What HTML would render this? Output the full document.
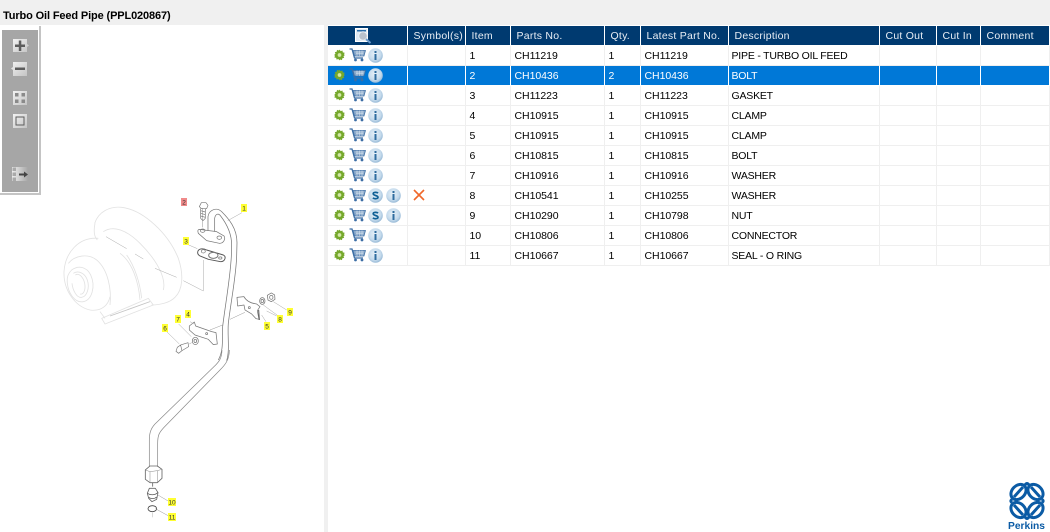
<!DOCTYPE html>
<html><head><meta charset="utf-8"><style>
html,body{margin:0;padding:0;width:1050px;height:532px;overflow:hidden;background:#fff;font-family:"Liberation Sans",sans-serif}
.a{position:absolute}
#top{left:0;top:0;width:1050px;height:25px;background:#f0f0f0}
#title{left:3px;top:9px;font:bold 11px/14px "Liberation Sans",sans-serif;color:#000;white-space:nowrap;letter-spacing:-.13px}
#split{left:324px;top:25px;width:4px;height:507px;background:#f0f0f0}
#tb{left:0;top:26px;width:39px;height:167px;border:solid #c4c4c4;border-width:0 2px 2px 0;background:#fff}
#tbi{left:2px;top:4px;width:36px;height:162px;background:#a6a6a6}
table{position:absolute;left:328px;top:26px;border-collapse:collapse;table-layout:fixed;width:722px;font-size:10.5px}
th{background:#003a70;color:#e8eef5;font-weight:normal;height:19px;padding:0 0 0 6px;text-align:left;border-right:1px solid #fff;border-bottom:1px solid #fff;white-space:nowrap;letter-spacing:.25px;overflow:hidden}
td{height:19px;padding:0 0 0 4px;border-right:1px solid #efefef;border-bottom:1px solid #efefef;color:#000;white-space:nowrap;overflow:hidden;letter-spacing:-.05px}
td:nth-child(7){padding-left:3px;letter-spacing:-.2px}
tr.s td{background:#0078d7;color:#fff;border-right-color:#fff;border-bottom-color:#fff}
td.i{padding:0;position:relative}
td.i svg{position:absolute;left:0;top:0}
</style></head><body>
<svg width="0" height="0" style="position:absolute"><defs>
<filter id="soft" x="-5%" y="-5%" width="110%" height="110%"><feGaussianBlur stdDeviation=".3"/></filter>
<symbol id="g" viewBox="0 0 12 12"><path d="M6 .2l1.300 1.600 1.900-.7.400 2 2 .4-.7 1.900L11.900 6l-1.500 1.300.7 1.900-2 .4-.4 2-1.900-.7L6 11.900l-1.300-1.500-1.900.7-.4-2-2-.4.7-1.900L.1 6l1.500-1.300-.7-1.900 2-.4.4-2 1.900.7z" fill="#76a82c"/><circle cx="6" cy="6" r="2" fill="#d5e8a8"/></symbol>
<symbol id="c" viewBox="0 0 17 14"><path d="M.5 1H3l2.500 9H14" fill="none" stroke="#3c6ea5" stroke-width="1.300"/><path d="M4 2.500h12.500L15 8H5.500z" fill="#86a6c8" stroke="#3c6ea5" stroke-width=".7"/><path d="M6.500 4h8.500M7 5.700h7.500M8 2.500V8M10.500 2.500V8M13 2.500V8" stroke="#dfe9f3" stroke-width=".5"/><circle cx="6.500" cy="12" r="1.400" fill="#3c6ea5"/><circle cx="13" cy="12" r="1.400" fill="#3c6ea5"/></symbol>
<radialGradient id="b" cx=".45" cy=".4" r=".65"><stop offset="0" stop-color="#e8f1f8"/><stop offset=".65" stop-color="#c4daec"/><stop offset="1" stop-color="#8ab0d0"/></radialGradient>
<symbol id="n" viewBox="0 0 15 15"><circle cx="7.500" cy="7.500" r="7.300" fill="url(#b)"/><rect x="6.500" y="3" width="2" height="2" fill="#2f6c9f"/><rect x="6.500" y="6" width="2" height="6" fill="#2f6c9f"/></symbol>
<symbol id="d" viewBox="0 0 15 15"><circle cx="7.500" cy="7.500" r="7.300" fill="url(#b)"/><path d="M10 5.200C9 4 5.200 4 5.200 5.800c0 2 4.800 1.400 4.800 3.500 0 1.800-3.800 1.800-5.100.5" fill="none" stroke="#0f6096" stroke-width="1.700"/></symbol>
<symbol id="r" viewBox="0 0 60 20"><use href="#g" x="6" y="3.500" width="11" height="11"/><use href="#c" x="21" y="2" width="17" height="14"/><use href="#n" x="40" y="2" width="15" height="15"/></symbol>
<symbol id="q" viewBox="0 0 78 20"><use href="#g" x="6" y="3.500" width="11" height="11"/><use href="#c" x="21" y="2" width="17" height="14"/><use href="#d" x="40" y="2" width="15" height="15"/><use href="#n" x="58" y="2" width="15" height="15"/></symbol>
</defs></svg>

<div class="a" id="top"></div>
<div class="a" id="title">Turbo Oil Feed Pipe (PPL020867)</div>

<svg class="a" style="left:0;top:0" width="324" height="532" viewBox="0 0 324 532">
<g filter="url(#soft)">
<g transform="translate(60,190) scale(.3333)" fill="none" stroke-linejoin="round">
<g stroke="#e2e2e2" stroke-width="2.500">
<path d="M104 100C115 65 150 48 185 52C250 60 325 130 355 205C372 255 368 300 345 322C330 338 300 345 275 345"/>
<path d="M105 100C100 125 102 140 112 150M130 125C160 105 200 120 240 160C285 205 320 260 310 300"/>
<path d="M115 145C55 140 15 190 12 245C10 300 45 350 90 360C125 365 145 345 150 320"/>
<path d="M25 220C45 195 85 190 110 210C145 240 155 300 150 345"/>
<path d="M35 240C55 225 80 230 92 255C108 290 95 330 70 335C45 340 25 310 22 280C20 260 25 250 35 240Z"/>
<path d="M40 250C55 240 75 250 82 270C90 295 80 320 65 322C50 325 38 300 36 280"/>
<path d="M46 255C58 248 70 262 74 280C78 300 70 315 60 312"/>
<path d="M180 190C215 215 235 270 240 330M200 195C225 230 240 280 245 325"/>
<path d="M125 385L265 325L280 345L135 402ZM125 385L135 402M120 365L135 385"/>
<path d="M150 378L270 335" stroke="#c4c4c4"/>
</g>
<path d="M138 140L200 176M225 192L250 207M285 235L350 262M370 272L430 303L430 210" stroke="#aaa" stroke-width="1.500"/>
<g stroke="#777" stroke-width="2.200">
<path d="M444 122L444 80C446 60 470 50 485 65C505 85 532 115 531 160L530 200C528 260 512 340 505 400C502 440 510 480 500 512"/>
<path d="M464 125L464 85C466 72 475 68 482 78C495 95 515 125 515 165L514 200C510 270 495 350 488 410C486 445 492 480 475 510"/>
<path d="M418 118L470 125L492 138C498 148 490 160 478 160L440 152L415 130C412 122 414 118 418 118Z"/>
<ellipse cx="428" cy="122" rx="7" ry="5"/><ellipse cx="478" cy="143" rx="7" ry="5"/>
<path d="M414 183C418 175 430 175 440 180L490 195C500 200 495 215 482 215L445 208L420 198C412 193 412 188 414 183Z" stroke="#555" stroke-width="2.800"/>
<ellipse cx="430" cy="184" rx="6" ry="5"/><ellipse cx="460" cy="196" rx="14" ry="9" stroke-width="3"/><ellipse cx="481" cy="204" rx="5" ry="3.500"/>
<path d="M428 54L428 112" stroke-width="1.200"/>
<path d="M418 50L424 38H438L444 46L440 56H424ZM422 56V85M436 56V85M422 85L429 92L436 85M422 62L436 66M422 70L436 74M422 78L436 82" stroke-width="2"/>
<path d="M531 322L552 320C560 335 575 340 590 342L600 350L592 362L597 388L588 386L575 372L555 360L552 345L533 348Z"/>
<path d="M596 360L598 390" stroke-width="3" stroke="#555"/><ellipse cx="568" cy="353" rx="3" ry="3"/>
<ellipse cx="607" cy="333" rx="8" ry="10"/><ellipse cx="607" cy="333" rx="4" ry="5"/>
<path d="M622 316L634 309L644 315L645 328L634 335L624 330Z"/><ellipse cx="634" cy="322" rx="5" ry="6"/>
<path d="M403 396L407 408L455 425L468 428L472 462L460 464L445 448L405 435L388 420L388 408Z"/><ellipse cx="440" cy="431" rx="3" ry="3"/>
<ellipse cx="406" cy="453" rx="9" ry="11"/><ellipse cx="406" cy="453" rx="4" ry="5"/>
<path d="M352 472L362 465L384 458L386 470L366 482L356 490L348 484ZM362 466L366 482" stroke-width="2"/>
<path d="M450 420L488 405M510 388L555 367M388 462L395 458" stroke-width="1.300" stroke="#888"/>
<path d="M503 92L546 68M390 395L402 402M356 402L394 440M320 425L358 462M375 160L412 176M620 363L650 378M610 345L655 378M640 335L680 360M605 375L618 395" stroke="#999" stroke-width="1.300"/>
</g>
</g>
<g fill="none" stroke="#888" stroke-width="2.100" transform="translate(120,350) scale(.3333)" stroke-linejoin="round">
<path d="M328 0C328 30 315 45 300 60L132 232C118 247 113 255 113 280V350"/>
<path d="M306 0C305 25 298 35 282 50L105 222C92 236 88 250 88 270V348"/>
<path d="M76 360L90 348H112L126 358V385L112 398H90L76 388Z" stroke-width="2.500" stroke="#666"/><path d="M90 365V398M112 362V398M76 360L90 365L112 362L126 358" stroke-width="1.500"/>
<path d="M98 398V410M88 415H106L114 428L110 448L96 455L86 445L82 430Z" stroke="#666" stroke-width="2.500"/><path d="M83 430C90 436 106 436 113 428M86 442C92 447 104 447 110 441" stroke="#555"/>
<ellipse cx="97" cy="476" rx="13" ry="9" stroke="#444" stroke-width="2.500"/>
<path d="M98 488V502" stroke="#aaa" stroke-width="1.300"/><path d="M112 434L146 454M106 476L146 498" stroke-width="1.300"/>
</g>
</g>
<g font-family="Liberation Sans,sans-serif" font-size="6.500" text-anchor="middle" fill="#333">
<rect x="241" y="204" width="6" height="8" fill="#ffff33"/><text x="244" y="210.500">1</text>
<rect x="181" y="198" width="6" height="8" fill="#f08a8a"/><text x="184" y="204.500">2</text>
<rect x="183" y="237" width="6" height="8" fill="#ffff33"/><text x="186" y="243.500">3</text>
<rect x="185" y="310" width="6" height="8" fill="#ffff33"/><text x="188" y="316.500">4</text>
<rect x="264" y="322" width="6" height="8" fill="#ffff33"/><text x="267" y="328.500">5</text>
<rect x="162" y="324" width="6" height="8" fill="#ffff33"/><text x="165" y="330.500">6</text>
<rect x="175" y="315" width="6" height="8" fill="#ffff33"/><text x="178" y="321.500">7</text>
<rect x="277" y="315" width="6" height="8" fill="#ffff33"/><text x="280" y="321.500">8</text>
<rect x="287" y="308" width="6" height="8" fill="#ffff33"/><text x="290" y="314.500">9</text>
<rect x="168" y="498" width="8" height="8" fill="#ffff33"/><text x="172" y="504.500">10</text>
<rect x="168" y="513" width="8" height="8" fill="#ffff33"/><text x="172" y="519.500">11</text>
</g>
</svg>

<div class="a" id="split"></div>

<div class="a" id="tb"><div class="a" id="tbi"></div></div>
<svg class="a" style="left:0;top:26px" width="40" height="160" viewBox="0 26 40 160">
<defs><linearGradient id="k" x1="0" y1="0" x2="1" y2="1"><stop offset="0" stop-color="#f2f2f2"/><stop offset="1" stop-color="#c4c4c4"/></linearGradient>
<linearGradient id="k2" x1="0" y1="0" x2="1" y2="0"><stop offset="0" stop-color="#efefef"/><stop offset="1" stop-color="#a6a6a6"/></linearGradient></defs>
<path d="M13 39h14v5l2 1.500-2 1.500v5H13z" fill="url(#k)"/><path d="M15 44.500h10v2.500H15zM18.800 40.500h2.500v10.500h-2.500z" fill="#5d5d5d"/>
<path d="M27 62H13v5l-2 1.500 2 1.500v6h14z" fill="url(#k)"/><path d="M15 67.500h10V70H15z" fill="#5d5d5d"/>
<rect x="13" y="91" width="14" height="14" fill="url(#k)"/><path d="M15 93h3.500v3.500H15zM21.500 93H25v3.500h-3.500zM15 99.500h3.500V103H15zM21.500 99.500H25V103h-3.500z" fill="#8a8a8a"/>
<rect x="13" y="114" width="14" height="14" fill="url(#k)"/><rect x="16" y="117" width="8" height="8" fill="none" stroke="#5d5d5d" stroke-width="1"/>
<path d="M12 167h16v14H12z" fill="url(#k2)"/><path d="M12.500 167.500h3.500v3.500h-3.500zM12.500 172.500h3.500v3.500h-3.500zM12.500 177.500h3.500v3.500h-3.500z" fill="#a9a9a9"/><path d="M19 173.500h5v-2l4 3-4 3v-2h-5z" fill="#444"/>
</svg>

<table>
<colgroup><col style="width:79px"><col style="width:58px"><col style="width:45px"><col style="width:94px"><col style="width:36px"><col style="width:88px"><col style="width:151px"><col style="width:57px"><col style="width:44px"><col></colgroup>
<tr><th style="position:relative"><svg style="position:absolute;left:27px;top:2px" width="17" height="16" viewBox="0 0 17 16"><rect x=".5" y=".5" width="12" height="13" fill="#dfe9f3" stroke="#fff"/><rect x="2" y="2" width="9" height="1.500" fill="#2a6da8"/><circle cx="8" cy="8" r="4.300" fill="#b9c2cc" stroke="#eef3f7"/><path d="M11 11l4.500 4" stroke="#6d9ccc" stroke-width="2"/></svg></th><th>Symbol(s)</th><th>Item</th><th>Parts No.</th><th>Qty.</th><th>Latest Part No.</th><th>Description</th><th>Cut Out</th><th>Cut In</th><th>Comment</th></tr>
<tr><td class="i"><svg width="60" height="20"><use href="#r" width="60" height="20"/></svg></td><td></td><td>1</td><td>CH11219</td><td>1</td><td>CH11219</td><td>PIPE - TURBO OIL FEED</td><td></td><td></td><td></td></tr>
<tr class="s"><td class="i"><svg width="60" height="20"><use href="#r" width="60" height="20"/></svg></td><td></td><td>2</td><td>CH10436</td><td>2</td><td>CH10436</td><td>BOLT</td><td></td><td></td><td></td></tr>
<tr><td class="i"><svg width="60" height="20"><use href="#r" width="60" height="20"/></svg></td><td></td><td>3</td><td>CH11223</td><td>1</td><td>CH11223</td><td>GASKET</td><td></td><td></td><td></td></tr>
<tr><td class="i"><svg width="60" height="20"><use href="#r" width="60" height="20"/></svg></td><td></td><td>4</td><td>CH10915</td><td>1</td><td>CH10915</td><td>CLAMP</td><td></td><td></td><td></td></tr>
<tr><td class="i"><svg width="60" height="20"><use href="#r" width="60" height="20"/></svg></td><td></td><td>5</td><td>CH10915</td><td>1</td><td>CH10915</td><td>CLAMP</td><td></td><td></td><td></td></tr>
<tr><td class="i"><svg width="60" height="20"><use href="#r" width="60" height="20"/></svg></td><td></td><td>6</td><td>CH10815</td><td>1</td><td>CH10815</td><td>BOLT</td><td></td><td></td><td></td></tr>
<tr><td class="i"><svg width="60" height="20"><use href="#r" width="60" height="20"/></svg></td><td></td><td>7</td><td>CH10916</td><td>1</td><td>CH10916</td><td>WASHER</td><td></td><td></td><td></td></tr>
<tr><td class="i"><svg width="78" height="20"><use href="#q" width="78" height="20"/></svg></td><td class="i"><svg width="30" height="20"><path d="M6 4l10 10M16 4L6 14" stroke="#f0682a" stroke-width="1.600" fill="none"/></svg></td><td>8</td><td>CH10541</td><td>1</td><td>CH10255</td><td>WASHER</td><td></td><td></td><td></td></tr>
<tr><td class="i"><svg width="78" height="20"><use href="#q" width="78" height="20"/></svg></td><td></td><td>9</td><td>CH10290</td><td>1</td><td>CH10798</td><td>NUT</td><td></td><td></td><td></td></tr>
<tr><td class="i"><svg width="60" height="20"><use href="#r" width="60" height="20"/></svg></td><td></td><td>10</td><td>CH10806</td><td>1</td><td>CH10806</td><td>CONNECTOR</td><td></td><td></td><td></td></tr>
<tr><td class="i"><svg width="60" height="20"><use href="#r" width="60" height="20"/></svg></td><td></td><td>11</td><td>CH10667</td><td>1</td><td>CH10667</td><td>SEAL - O RING</td><td></td><td></td><td></td></tr>
</table>

<svg class="a" style="left:1005px;top:480px" width="45" height="52" viewBox="0 0 45 52">
<g fill="none" stroke="#0b5ba5" stroke-width="3">
<ellipse cx="13.500" cy="12" rx="8.500" ry="6.500" transform="rotate(-45 13.500 12)"/>
<path d="M9 17L18 7"/>
<ellipse cx="30.500" cy="12" rx="8.500" ry="6.500" transform="rotate(45 30.500 12)"/>
<path d="M35 17L26 7"/>
<ellipse cx="13.500" cy="30" rx="8.500" ry="6.500" transform="rotate(45 13.500 30)"/>
<path d="M9 25l9 10"/>
<ellipse cx="30.500" cy="30" rx="8.500" ry="6.500" transform="rotate(-45 30.500 30)"/>
<path d="M35 25l-9 10"/>
<path d="M20 5C21.500 3 22.500 3 24 5M20 37c1.500 2 2.500 2 4 0M7 19.500c-1.500 1-1.500 2 0 3M37 19.500c1.500 1 1.500 2 0 3"/>
</g>
<text x="3" y="49" font-family="Liberation Sans,sans-serif" font-size="10.500" font-weight="bold" fill="#0b5ba5" textLength="37" lengthAdjust="spacingAndGlyphs">Perkins</text>
</svg>
</body></html>
